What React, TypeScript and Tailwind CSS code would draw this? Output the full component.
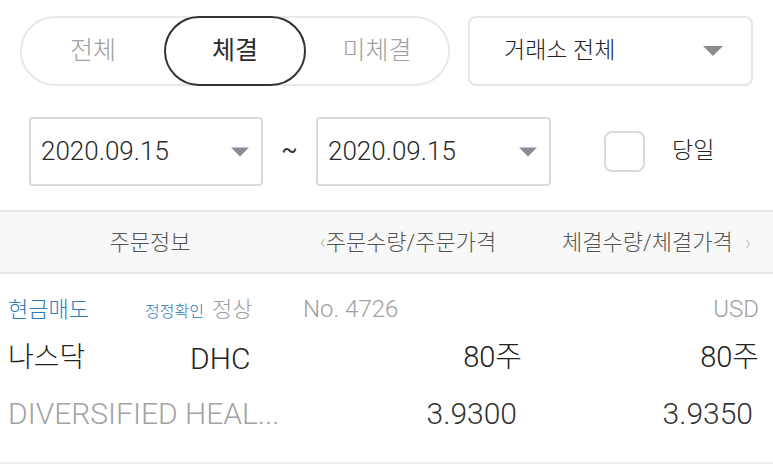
const font = { fontFamily: 'Roboto, "Noto Sans CJK KR", sans-serif' };

function Caret({ className }: { className: string }) {
  return (
    <svg viewBox="0 0 20 10" className={className} aria-hidden="true">
      <path d="M0 0 H20 L10 10 Z" fill="currentColor" />
    </svg>
  );
}

function DateBox({ value, width }: { value: string; width: string }) {
  return (
    <div
      className={`flex h-[69px] ${width} items-center justify-between rounded-[4px] border-2 border-[#d9d9d9] pl-[10px] pr-[12px]`}
    >
      <span className="text-[26px] text-[#2a2a2a]">{value}</span>
      <Caret className="h-[10px] w-[18px] text-[#878d96]" />
    </div>
  );
}

export default function App() {
  return (
    <div style={font} className="h-[464px] w-[773px] overflow-hidden bg-white font-light">
      {/* filters */}
      <div className="flex gap-[18px] pl-[20px] pt-[16px]">
        <div className="grid h-[70px] w-[430px] grid-cols-3 rounded-full border-2 border-[#e8e8e8]">
          <div className="flex items-center justify-center text-[25px] text-[#a0a0a0]">전체</div>
          <div className="-my-[2px] flex items-center justify-center rounded-full border-2 border-[#333] text-[25px] font-normal text-[#2a2a2a]">
            체결
          </div>
          <div className="flex items-center justify-center text-[25px] text-[#a0a0a0]">미체결</div>
        </div>
        <div className="flex h-[70px] w-[285px] items-center justify-between rounded-[8px] border-2 border-[#e6e6e6] pl-[34px] pr-[28px]">
          <span className="text-[23px] text-[#222]">거래소 전체</span>
          <Caret className="h-[10px] w-[20px] text-[#8c8c8c]" />
        </div>
      </div>

      <div className="mt-[31px] flex items-center pl-[29px]">
        <DateBox value="2020.09.15" width="w-[234px]" />
        <div className="w-[53px] pb-[4px] text-center text-[24px] font-normal text-[#333]">~</div>
        <DateBox value="2020.09.15" width="w-[235px]" />
        <div className="ml-[53px] h-[41px] w-[41px] rounded-[8px] border-2 border-[#dadada]" />
        <span className="ml-[27px] text-[23px] text-[#222]">당일</span>
      </div>

      {/* table header */}
      <div className="mt-[24px] grid h-[64px] grid-cols-[300px_222px_1fr] items-center border-y-2 border-[#e6e6e6] bg-[#f8f8f8] text-[22px] text-[#555]">
        <div className="text-center">주문정보</div>
        <div className="flex items-center justify-center pr-[6px]">
          <span className="text-[20px] text-[#b8b8b8]">‹</span>
          <span>주문수량/주문가격</span>
        </div>
        <div className="flex items-center gap-[12px] pl-[40px]">
          <span>체결수량/체결가격</span>
          <span className="text-[22px] text-[#c4c4c4]">›</span>
        </div>
      </div>

      {/* row */}
      <div className="h-[190px] border-b-2 border-[#efefef] pl-[8px] pr-[14px] pt-[17px]">
        <div className="grid h-[34px] grid-cols-[292px_222px_1fr] items-center">
          <div className="flex items-baseline">
            <span className="w-[137px] text-[22px] text-[#2e7bbd]">현금매도</span>
            <span className="text-[16px] text-[#2e7bbd]">정정확인</span>
            <span className="ml-[8px] text-[22px] text-[#a0a0a0]">정상</span>
          </div>
          <div className="pl-[3px] text-[24px] text-[#a0a0a0]">No. 4726</div>
          <div className="text-right text-[24px] text-[#a0a0a0]">USD</div>
        </div>
        <div className="grid h-[66px] grid-cols-[292px_222px_1fr] items-center text-[#222]">
          <div className="flex items-center">
            <span className="w-[182px] text-[28px]">나스닥</span>
            <span className="text-[30px]">DHC</span>
          </div>
          <div className="text-right text-[29px]">80주</div>
          <div className="text-right text-[29px]">80주</div>
        </div>
        <div className="grid h-[40px] grid-cols-[292px_222px_1fr] items-center">
          <div className="whitespace-nowrap text-[30px] text-[#a3a3a3]">DIVERSIFIED HEAL...</div>
          <div className="pr-[5px] text-right text-[30px] text-[#333]">3.9300</div>
          <div className="pr-[6px] text-right text-[30px] text-[#333]">3.9350</div>
        </div>
      </div>
    </div>
  );
}
